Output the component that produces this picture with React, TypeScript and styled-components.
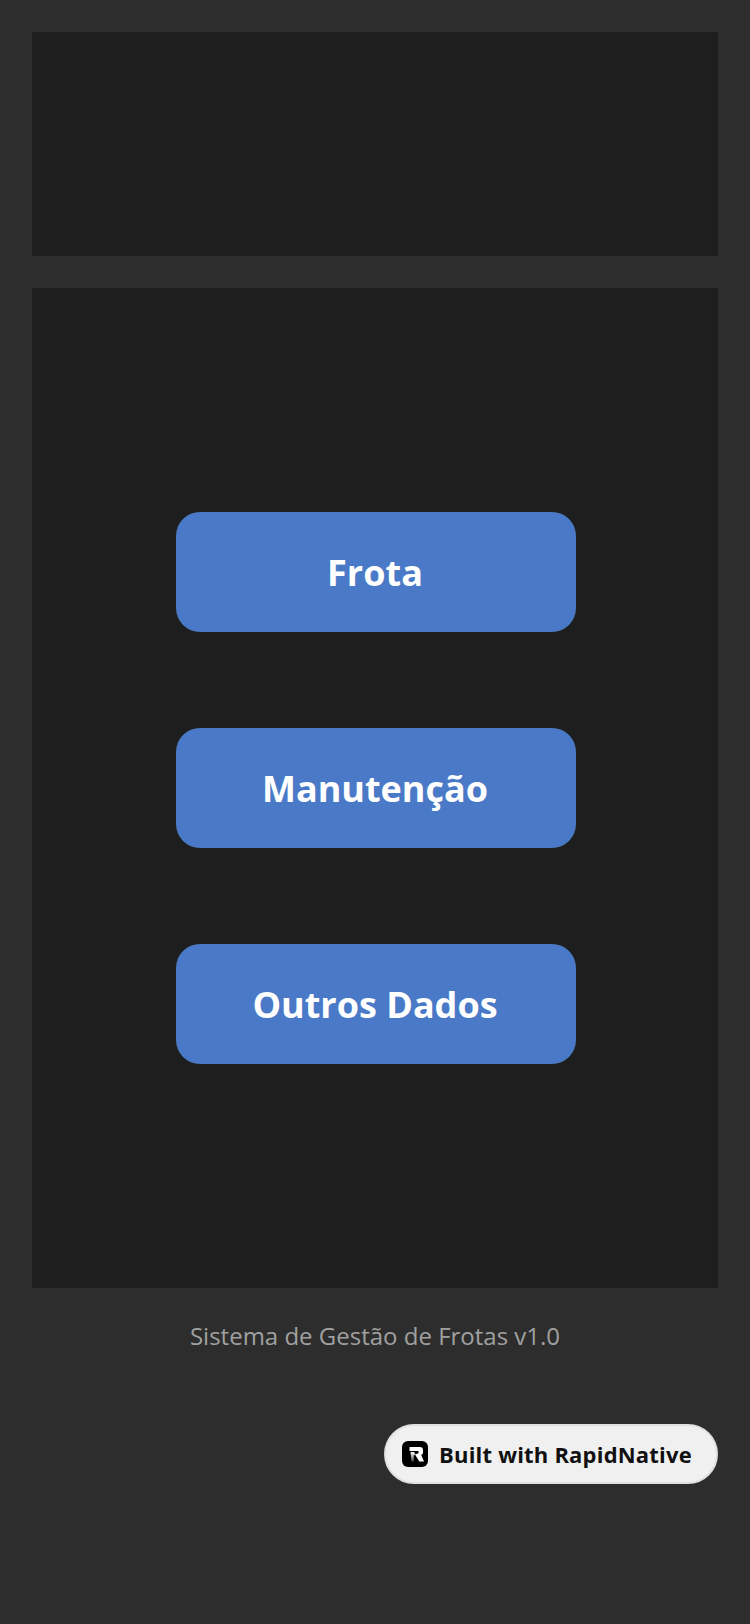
import React from 'react'
import styled, { createGlobalStyle } from 'styled-components'

const GlobalStyle = createGlobalStyle`
  html, body {
    margin: 0;
    padding: 0;
    background: #2d2d2d;
  }
  * {
    box-sizing: border-box;
  }
`

const Screen = styled.div`
  position: relative;
  display: flex;
  flex-direction: column;
  gap: 32px;
  width: 750px;
  height: 1624px;
  padding: 32px;
  background: #2d2d2d;
  font-family: "Open Sans", "Noto Sans", sans-serif;
`

const TopPanel = styled.div`
  height: 224px;
  background: #1e1e1e;
`

const MainPanel = styled.div`
  display: flex;
  flex-direction: column;
  align-items: center;
  justify-content: center;
  gap: 96px;
  height: 1000px;
  background: #1e1e1e;
`

const MenuButton = styled.button`
  display: flex;
  align-items: center;
  justify-content: center;
  width: 400px;
  height: 120px;
  margin-left: 2px;
  padding: 0 2px 0 0;
  border: none;
  border-radius: 24px;
  background: #4a7ac7;
  color: #fff;
  font-family: inherit;
  font-size: 36px;
  font-weight: 700;
`

const Footer = styled.p`
  margin: 0;
  color: #a0a0a0;
  font-size: 24px;
  line-height: 32px;
  text-align: center;
`

const Badge = styled.div`
  position: absolute;
  left: 384px;
  top: 1424px;
  display: flex;
  align-items: center;
  gap: 11px;
  width: 334px;
  height: 60px;
  padding-left: 16px;
  border: 2px solid #e0e0e0;
  border-radius: 30px;
  background: #f0f0f0;
  color: #111;
  font-size: 22px;
  font-weight: 700;
`

const BadgeText = styled.span`
  letter-spacing: 0.2px;
  white-space: nowrap;
`

const RapidLogo = () => (
  <svg width="26" height="26" viewBox="0 0 26 26">
    <defs>
      <linearGradient id="rapidStem" x1="0" y1="0" x2="0" y2="1">
        <stop offset="0" stopColor="#fff" />
        <stop offset="1" stopColor="#444" />
      </linearGradient>
    </defs>
    <rect width="26" height="26" rx="6" fill="#000" />
    <path
      d="M7.5 6h10.5C19.9 6 21 7.2 21 9v2.6c0 1.2-.7 2-1.8 2.4l2.8 6.5h-4.7l-4.3-7.1 3.5-1.2V10H7.5z"
      fill="#fff"
    />
    <path d="M8.5 11h3.6l1.4 2.6-1.7.8v6.1H9.5z" fill="url(#rapidStem)" />
  </svg>
)

const App = () => {
  return (
    <>
      <GlobalStyle />
      <Screen>
        <TopPanel />
        <MainPanel>
          <MenuButton>Frota</MenuButton>
          <MenuButton>Manutenção</MenuButton>
          <MenuButton>Outros Dados</MenuButton>
        </MainPanel>
        <Footer>Sistema de Gestão de Frotas v1.0</Footer>
        <Badge>
          <RapidLogo />
          <BadgeText>Built with RapidNative</BadgeText>
        </Badge>
      </Screen>
    </>
  )
}

export default App
